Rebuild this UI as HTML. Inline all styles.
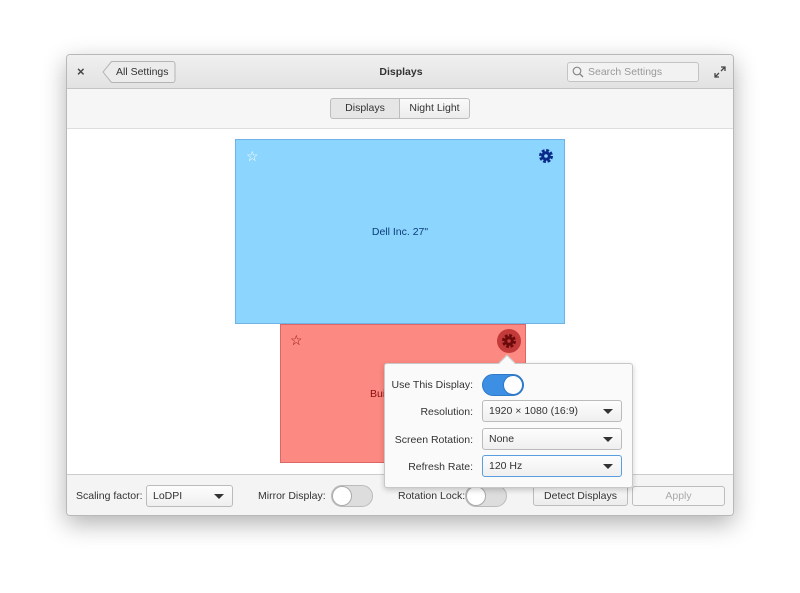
<!DOCTYPE html>
<html><head><meta charset="utf-8"><style>
*{box-sizing:border-box;margin:0;padding:0}
body{width:800px;height:593px;background:#fff;font-family:"Liberation Sans",sans-serif;font-size:10.5px;color:#333;position:relative;overflow:hidden}
.abs{position:absolute}
.win{left:66px;top:54px;width:668px;height:462px;border:1px solid #b8b8b8;border-radius:4px;box-shadow:0 8px 24px rgba(0,0,0,.3);overflow:hidden;background:#fff}
.hdr{left:0;top:0;width:668px;height:34px;background:linear-gradient(#f0f0f0,#e2e2e2);border-bottom:1px solid #c4c4c4}
.tb{left:0;top:34px;width:668px;height:40px;background:#f6f6f6;border-bottom:1px solid #ddd}
.bot{left:0;top:419px;width:668px;height:43px;background:#f4f4f4;border-top:1px solid #ccc}
.btn{border:1px solid #bdbdbd;border-radius:3px;background:linear-gradient(#fafafa,#ececec);text-align:center;color:#333}
.combo{border:1px solid #bbb;border-radius:3px;background:linear-gradient(#fdfdfd,#efefef);padding-left:6px;line-height:20px}
.combo:after{content:"";position:absolute;right:8px;top:8px;border-left:5px solid transparent;border-right:5px solid transparent;border-top:5px solid #333}
.sw{width:42px;height:22px;border-radius:11px;border:1px solid #bbb;background:#ddd}
.sw i{position:absolute;top:0;left:0;width:20px;height:20px;border-radius:50%;background:#fff;border:1px solid #aaa}
.lbl{text-align:right;color:#333}
</style></head><body>
<div class="abs win">
 <div class="abs hdr">
  <div class="abs" style="left:10px;top:9px;font-size:13px;font-weight:bold;color:#444">×</div>
  <svg class="abs" style="left:35px;top:6px" width="74" height="22"><path d="M9.5 0.5H70.5a2.5 2.5 0 0 1 2.5 2.5V19a2.5 2.5 0 0 1-2.5 2.5H9.5L1 11z" fill="#ececec" stroke="#b5b5b5"/></svg>
  <div class="abs" style="left:49px;top:11px">All Settings</div>
  <div class="abs" style="left:0;width:668px;top:11px;text-align:center;font-weight:bold">Displays</div>
  <div class="abs" style="left:500px;top:7px;width:132px;height:20px;border:1px solid #c4c4c4;border-radius:3px;background:#f2f2f2;color:#999;line-height:18px;padding-left:20px">Search Settings
   <svg class="abs" style="left:4px;top:3px" width="12" height="12"><circle cx="5" cy="5" r="3.8" fill="none" stroke="#888" stroke-width="1.2"/><line x1="8" y1="8" x2="11" y2="11" stroke="#888" stroke-width="1.3"/></svg></div>
  <svg class="abs" style="left:647px;top:11px" width="12" height="12"><path d="M7 1h4v4M11 1L7 5M5 11H1V7M1 11l4-4" fill="none" stroke="#444" stroke-width="1.3"/></svg>
 </div>
 <div class="abs tb">
  <div class="abs btn" style="left:263px;top:9px;width:70px;height:21px;line-height:19px;background:#e6e6e6;border-radius:3px 0 0 3px">Displays</div>
  <div class="abs btn" style="left:332px;top:9px;width:71px;height:21px;line-height:19px;border-radius:0 3px 3px 0">Night Light</div>
 </div>
 <div class="abs" style="left:168px;top:84px;width:330px;height:185px;background:#8cd5fe;border:1px solid #6fb2e6"></div>
 <div class="abs" style="left:168px;top:171px;width:330px;text-align:center;color:#0c3c7a">Dell Inc. 27"</div>
 <div class="abs" style="left:179px;top:93px;color:#fff;font-size:14px">☆</div>
 <svg class="abs" style="left:472px;top:94px" width="14" height="14" viewBox="0 0 14 14"><circle cx="7" cy="7" r="5.6" fill="none" stroke="#0a2a8a" stroke-width="2.8" stroke-dasharray="2.8 1.6"/><circle cx="7" cy="7" r="4.8" fill="#0a2a8a"/><circle cx="7" cy="7" r="1.8" fill="#8cd5fe"/></svg>
 <div class="abs" style="left:213px;top:269px;width:246px;height:139px;background:#fd8a82;border:1px solid #d66"></div>
 <div class="abs" style="left:303px;top:333px;color:#8a1010">Built-in</div>
 <div class="abs" style="left:223px;top:277px;color:#8a1010;font-size:14px">☆</div>
 <div class="abs" style="left:430px;top:274px;width:24px;height:24px;border-radius:50%;background:#c33a3a"></div>
 <svg class="abs" style="left:435px;top:279px" width="14" height="14" viewBox="0 0 14 14"><circle cx="7" cy="7" r="5.6" fill="none" stroke="#6a0a0a" stroke-width="2.8" stroke-dasharray="2.8 1.6"/><circle cx="7" cy="7" r="4.8" fill="#6a0a0a"/><circle cx="7" cy="7" r="1.8" fill="#c33a3a"/></svg>
 <div class="abs bot">
  <div class="abs" style="left:9px;top:15px">Scaling factor:</div>
  <div class="abs combo" style="left:79px;top:10px;width:87px;height:22px">LoDPI</div>
  <div class="abs" style="left:191px;top:15px">Mirror Display:</div>
  <div class="abs sw" style="left:264px;top:10px"><i></i></div>
  <div class="abs" style="left:331px;top:15px">Rotation Lock:</div>
  <div class="abs sw" style="left:398px;top:10px"><i></i></div>
  <div class="abs btn" style="left:466px;top:11px;width:95px;height:20px;line-height:18px">Detect Displays</div>
  <div class="abs btn" style="left:565px;top:11px;width:93px;height:20px;line-height:18px;color:#aaa;background:#f6f6f6">Apply</div>
 </div>
</div>
<div class="abs" style="left:384px;top:363px;width:249px;height:125px;background:#fafafa;border:1px solid #c8c8c8;border-radius:3px;box-shadow:0 2px 6px rgba(0,0,0,.2)"></div>
<div class="abs" style="left:501px;top:357px;width:12px;height:12px;background:#fafafa;border-left:1px solid #c8c8c8;border-top:1px solid #c8c8c8;transform:rotate(45deg)"></div>
<div class="abs lbl" style="left:384px;top:379px;width:89px">Use This Display:</div>
<div class="abs" style="left:482px;top:374px;width:42px;height:22px;border-radius:11px;background:#3d8fe4;border:1px solid #2e79c8"><i style="position:absolute;right:0;top:0;width:20px;height:20px;border-radius:50%;background:#fff;border:1px solid #2e79c8"></i></div>
<div class="abs lbl" style="left:384px;top:406px;width:89px">Resolution:</div>
<div class="abs combo" style="left:482px;top:400px;width:140px;height:22px">1920 × 1080 (16:9)</div>
<div class="abs lbl" style="left:384px;top:434px;width:89px">Screen Rotation:</div>
<div class="abs combo" style="left:482px;top:428px;width:140px;height:22px">None</div>
<div class="abs lbl" style="left:384px;top:461px;width:89px">Refresh Rate:</div>
<div class="abs combo" style="left:482px;top:455px;width:140px;height:22px;border-color:#5a9ee0">120 Hz</div>
</body></html>
